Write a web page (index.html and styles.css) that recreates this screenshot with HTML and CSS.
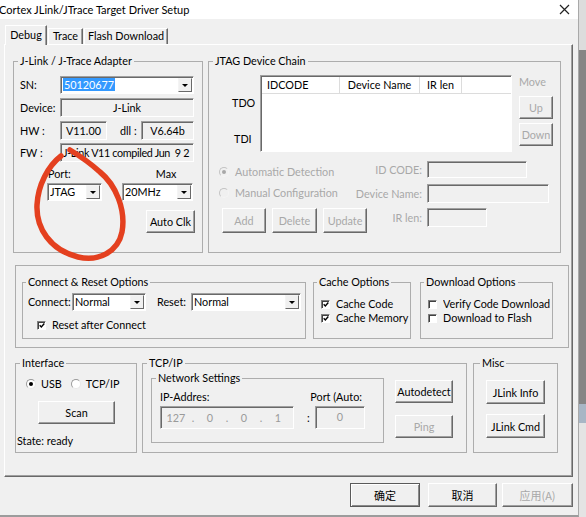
FILE: index.html
```html
<!DOCTYPE html>
<html>
<head>
<meta charset="utf-8">
<link rel="stylesheet" href="styles.css">
</head>
<body>
<div class="screen">
  <div class="window">
    <div class="titlebar">
      <span class="title">Cortex JLink/JTrace Target Driver Setup</span>
      <svg class="close" viewBox="0 0 11 11"><path d="M1 1 L10 10 M10 1 L1 10" stroke="#222" stroke-width="1.2"/></svg>
    </div>
    <div class="tabs">
      <div class="tab active t-debug">Debug</div>
      <div class="tab t-trace">Trace</div>
      <div class="tab t-flash">Flash Download</div>
    </div>
    <div class="panel">
      <div class="top-row">
        <fieldset class="group adapter">
          <legend>J-Link / J-Trace Adapter</legend>
          <div class="adapter-body">
            <div class="row h18">
              <span class="lbl w40">SN:</span>
              <div class="combo grow"><span class="val"><span class="sel">50120677</span></span><span class="drop"></span></div>
            </div>
            <div class="row h19 mt4">
              <span class="lbl w40">Device:</span>
              <div class="field grow center">J-Link</div>
            </div>
            <div class="row h19 mt4">
              <span class="lbl w40">HW :</span>
              <div class="field w47 center">V11.00</div>
              <span class="lbl dll">dll :</span>
              <div class="field grow center">V6.64b</div>
            </div>
            <div class="row h19 mt3">
              <span class="lbl w40">FW :</span>
              <div class="field grow fw">J-Link V11 compiled Jun&nbsp; 9 2</div>
            </div>
            <div class="row h14 mt5">
              <span class="lbl port-lbl">Port:</span>
              <span class="lbl max-lbl">Max</span>
            </div>
            <div class="row h18 mt2">
              <div class="combo port-combo"><span class="val">JTAG</span><span class="drop"></span></div>
              <div class="combo max-combo"><span class="val">20MHz</span><span class="drop"></span></div>
            </div>
            <div class="row mt9">
              <div class="btn autoclk">Auto Clk</div>
            </div>
          </div>
        </fieldset>
        <fieldset class="group jtag">
          <legend>JTAG Device Chain</legend>
          <div class="jt-top">
            <div class="jt-labels">
              <div class="tdo">TDO</div>
              <div class="tdi">TDI</div>
            </div>
            <div class="list">
              <div class="list-head">
                <span class="col c1">IDCODE</span>
                <span class="col c2">Device Name</span>
                <span class="col c3">IR len</span>
              </div>
            </div>
            <div class="move">
              <div class="move-lbl dis">Move</div>
              <div class="btn mv-up dis">Up</div>
              <div class="btn mv-down dis">Down</div>
            </div>
          </div>
          <div class="jt-bottom">
            <div class="jt-left">
              <div class="radio-row rr1 dis"><span class="radio on off"></span><span>Automatic Detection</span></div>
              <div class="radio-row rr2 dis"><span class="radio off"></span><span>Manual Configuration</span></div>
              <div class="jt-btns">
                <div class="btn b-add dis">Add</div>
                <div class="btn b-del dis">Delete</div>
                <div class="btn b-upd dis">Update</div>
              </div>
            </div>
            <div class="jt-right">
              <div class="frow fr1"><span class="flbl dis">ID CODE:</span><div class="field f-id"></div></div>
              <div class="frow fr2"><span class="flbl dis">Device Name:</span><div class="field f-dn"></div></div>
              <div class="frow fr3"><span class="flbl dis">IR len:</span><div class="field f-ir"></div></div>
            </div>
          </div>
        </fieldset>
      </div>

      <div class="opts">
        <fieldset class="group connect">
          <legend>Connect &amp; Reset Options</legend>
          <div class="row h18 mt4 cr-row">
            <span class="lbl w44">Connect:</span>
            <div class="combo c-conn"><span class="val">Normal</span><span class="drop"></span></div>
            <span class="lbl reset-lbl">Reset:</span>
            <div class="combo c-reset"><span class="val">Normal</span><span class="drop"></span></div>
          </div>
          <div class="check-row cr-check"><span class="check"><svg viewBox="0 0 7 7"><path d="M0.8 3.2 L2.7 5.2 L6.2 1.2" stroke="#000" stroke-width="1.6" fill="none"/></svg></span><span>Reset after Connect</span></div>
        </fieldset>
        <fieldset class="group cache">
          <legend>Cache Options</legend>
          <div class="check-row ck1"><span class="check"><svg viewBox="0 0 7 7"><path d="M0.8 3.2 L2.7 5.2 L6.2 1.2" stroke="#000" stroke-width="1.6" fill="none"/></svg></span><span>Cache Code</span></div>
          <div class="check-row ck2"><span class="check"><svg viewBox="0 0 7 7"><path d="M0.8 3.2 L2.7 5.2 L6.2 1.2" stroke="#000" stroke-width="1.6" fill="none"/></svg></span><span>Cache Memory</span></div>
        </fieldset>
        <fieldset class="group download">
          <legend>Download Options</legend>
          <div class="check-row ck1 dl"><span class="check"></span><span class="clip">Verify Code Download</span></div>
          <div class="check-row ck2 dl"><span class="check"></span><span>Download to Flash</span></div>
        </fieldset>
      </div>

      <div class="bottom-row">
        <fieldset class="group iface">
          <legend>Interface</legend>
          <div class="radio-row if-radios">
            <span class="radio on"></span><span class="usb">USB</span>
            <span class="radio r-tcp"></span><span>TCP/IP</span>
          </div>
          <div class="btn scan">Scan</div>
          <div class="state">State: ready</div>
        </fieldset>
        <fieldset class="group tcp">
          <legend>TCP/IP</legend>
          <div class="tcp-body">
            <fieldset class="group net">
              <legend>Network Settings</legend>
              <div class="row h14 net-lbls">
                <span class="lbl ip-lbl">IP-Addres:</span>
                <span class="lbl port-auto">Port (Auto:</span>
              </div>
              <div class="row net-fields">
                <div class="field ipfield">
                  <span class="oct">127</span><span class="dot">.</span><span class="oct">0</span><span class="dot">.</span><span class="oct">0</span><span class="dot">.</span><span class="oct">1</span>
                </div>
                <span class="colon">:</span>
                <div class="field portfield">0</div>
              </div>
            </fieldset>
            <div class="tcp-btns">
              <div class="btn b-auto">Autodetect</div>
              <div class="btn b-ping dis">Ping</div>
            </div>
          </div>
        </fieldset>
        <fieldset class="group misc">
          <legend>Misc</legend>
          <div class="btn b-info">JLink Info</div>
          <div class="btn b-cmd">JLink Cmd</div>
        </fieldset>
      </div>
    </div>
    <div class="footer">
      <div class="btn default f-ok">确定</div>
      <div class="btn f-cancel">取消</div>
      <div class="btn f-apply dis">应用(A)</div>
    </div>
  </div>
  <div class="desk"></div>
  <svg class="scribble" viewBox="0 0 586 517" width="586" height="517">
    <path d="M61 156 C48 166, 38 185, 37 205 C36 228, 50 250, 78 257 C98 262, 118 252, 122 232 C126 210, 116 185, 100 172 C90 163, 80 156, 70 150" stroke="#e4401f" stroke-width="5.5" fill="none" stroke-linecap="round"/>
  </svg>
</div>
</body>
</html>
```

FILE: styles.css
```css
* { box-sizing: border-box; }
body {
  margin: 0;
  font-family: Lato, "Noto Sans", "Noto Sans CJK SC", sans-serif;
  font-size: 10.8px;
  color: #000;
}
.screen {
  position: relative;
  display: flex;
  width: 586px;
  height: 517px;
  overflow: hidden;
  background: #f0f0f0;
}
.window {
  width: 579px;
  height: 517px;
  background: #f0f0f0;
  border-right: 1px solid #a9a9a9;
  border-bottom: 2px solid #9c9c9c;
  display: flex;
  flex-direction: column;
  flex: none;
}
.desk {
  flex: 1;
  background: linear-gradient(to bottom, #dcdcdc 0, #dcdcdc 50px, #858585 50px, #858585 404px, #a8b6c5 404px, #a8b6c5 423px, #e4e4e4 423px);
}
.titlebar {
  height: 19px;
  flex: none;
  background: #fff;
  display: flex;
  align-items: center;
  justify-content: space-between;
  padding-right: 8px;
}
.title { font-size: 11px; line-height: 17px; margin-left: -1px; }
.close { width: 11px; height: 11px; }

.tabs {
  height: 25px;
  flex: none;
  display: flex;
  align-items: flex-end;
  padding-left: 5px;
  position: relative;
  z-index: 1;
}
.tab {
  height: 16px;
  border: 1px solid;
  border-color: #fff #696969 transparent #fff;
  border-bottom: 0;
  box-shadow: inset -1px 0 #a0a0a0;
  line-height: 14px;
  text-align: center;
  white-space: nowrap;
}
.tab.active { height: 20px; margin-bottom: -1px; padding-top: 2px; background: #f0f0f0; }
.t-debug { width: 42px; }
.t-trace { width: 35px; margin-left: 1px; }
.t-flash { width: 84px; margin-left: 1px; }

.panel {
  margin-left: 4px;
  width: 569px;
  height: 433px;
  flex: none;
  border: 1px solid;
  border-color: #fff #696969 #696969 #fff;
  box-shadow: inset -1px -1px #a0a0a0;
  padding: 9px 0 0 8px;
}

.group {
  margin: 0;
  padding: 0;
  border: 1px solid #adadad;
  min-width: 0;
}
legend {
  padding: 0 2px;
  margin-left: 4px;
  line-height: 14px;
  white-space: nowrap;
}

.row { display: flex; align-items: center; }
.h14 { height: 14px; }
.h18 { height: 18px; }
.h19 { height: 19px; }
.mt2 { margin-top: 2px; }
.mt3 { margin-top: 3px; }
.mt4 { margin-top: 4px; }
.mt5 { margin-top: 5px; }
.mt9 { margin-top: 9px; }
.grow { flex: 1; min-width: 0; }
.w40 { width: 40px; flex: none; }
.w44 { width: 44px; flex: none; }
.w47 { width: 47px; flex: none; }
.lbl { white-space: nowrap; line-height: 14px; }
.center { text-align: center; }
.dis { color: #a8a8a8; }

.combo {
  display: flex;
  align-items: center;
  height: 18px;
  background: #fff;
  border: 1px solid;
  border-color: #a0a0a0 #fff #fff #a0a0a0;
  box-shadow: inset 1px 1px #696969;
  padding: 1px 1px 1px 2px;
}
.combo .val { flex: 1; min-width: 0; line-height: 14px; white-space: nowrap; overflow: hidden; }
.sel { background: #3399ff; color: #fff; padding: 0 1px; }
.drop {
  width: 14px;
  height: 14px;
  flex: none;
  border: 1px solid;
  border-color: #f4f4f4 #696969 #696969 #f4f4f4;
  background: #f0f0f0;
  display: flex;
  align-items: center;
  justify-content: center;
}
.drop::after {
  content: "";
  border-left: 3px solid transparent;
  border-right: 3px solid transparent;
  border-top: 3px solid #000;
}
.field {
  height: 19px;
  border: 1px solid;
  border-color: #a0a0a0 #fff #fff #a0a0a0;
  box-shadow: inset 1px 1px #696969;
  background: #f0f0f0;
  line-height: 17px;
  white-space: nowrap;
  overflow: hidden;
}
.fw { padding-left: 2px; letter-spacing: -0.35px; }
.btn {
  height: 23px;
  border: 1px solid;
  border-color: #fff #696969 #696969 #fff;
  box-shadow: inset -1px -1px #a0a0a0;
  background: #f0f0f0;
  display: flex;
  align-items: center;
  justify-content: center;
  white-space: nowrap;
  flex: none;
}
.btn.default {
  border-color: #5a5a5a;
  box-shadow: inset 1px 1px #fff, inset -1px -1px #8a8a8a;
}

.radio {
  width: 10px;
  height: 10px;
  flex: none;
  border-radius: 50%;
  border: 1px solid;
  border-color: #9a9a9a #e8e8e8 #e8e8e8 #9a9a9a;
  background: #fff;
  display: flex;
  align-items: center;
  justify-content: center;
}
.radio.on::after {
  content: "";
  width: 4px;
  height: 4px;
  border-radius: 50%;
  background: #000;
}
.radio.off { background: #f0f0f0; border-color: #c4c4c4 #f4f4f4 #f4f4f4 #c4c4c4; }
.radio.on.off::after { background: #a8a8a8; }
.radio-row { display: flex; align-items: center; height: 14px; line-height: 14px; white-space: nowrap; }
.radio-row .radio { margin-right: 6px; }

.check {
  width: 9px;
  height: 9px;
  flex: none;
  border: 1px solid;
  border-color: #808080 #fff #fff #808080;
  box-shadow: inset 1px 1px #404040;
  background: #fff;
  display: flex;
  align-items: center;
  justify-content: center;
  margin-right: 6px;
}
.check svg { width: 7px; height: 7px; margin: 1px 0 0 1px; }
.check-row { display: flex; align-items: center; height: 14px; line-height: 14px; white-space: nowrap; }

/* top row */
.top-row { display: flex; gap: 5px; }
.adapter { width: 190px; flex: none; }
.jtag { width: 353px; flex: none; }
.adapter-body { padding: 8px 8px 19px 6px; }
.dll { width: 21px; margin-left: 13px; flex: none; }
.port-lbl { margin-left: 28px; }
.max-lbl { margin-left: 85px; }
.port-combo { width: 55px; margin-left: 27px; flex: none; }
.max-combo { width: 71px; margin-left: 20px; flex: none; }
.autoclk { width: 49px; margin-left: 126px; }

.jt-top { display: flex; padding-top: 7px; height: 84px; }
.jt-labels { width: 51px; flex: none; line-height: 14px; }
.tdo { margin-top: 21px; padding-left: 23px; }
.tdi { margin-top: 22px; padding-left: 25px; }
.list {
  width: 252px;
  height: 77px;
  flex: none;
  background: #fff;
  border: 1px solid;
  border-color: #a0a0a0 #fff #fff #a0a0a0;
  box-shadow: inset 1px 1px #696969;
  padding: 1px 0 0 1px;
}
.list-head { display: flex; height: 17px; border-bottom: 1px solid #dcdcdc; }
.col { border-right: 1px solid #dcdcdc; line-height: 16px; white-space: nowrap; }
.c1 { width: 78px; padding-left: 5px; }
.c2 { width: 80px; text-align: center; }
.c3 { width: 42px; text-align: center; }
.move { width: 34px; margin-left: 7px; flex: none; }
.move-lbl { line-height: 14px; padding-left: 0; }
.mv-up { margin-top: 7px; width: 34px; }
.mv-down { margin-top: 4px; width: 34px; }

.jt-bottom { display: grid; grid-template-columns: 146px auto; margin-top: 6px; padding-bottom: 19px; }
.jt-left { min-width: 0; }
.rr1 { margin-top: 7px; padding-left: 10px; }
.rr2 { margin-top: 7px; padding-left: 10px; }
.jt-btns { display: flex; gap: 6px; margin-top: 8px; padding-left: 13px; width: 200px; }
.jt-btns .btn { height: 25px; }
.b-add { width: 44px; }
.b-del { width: 45px; }
.b-upd { width: 44px; }
.frow { display: flex; align-items: center; }
.flbl { width: 67px; text-align: right; margin-right: 5px; white-space: nowrap; line-height: 14px; flex: none; }
.fr1 { margin-top: 3px; }
.fr1 .field { height: 17px; }
.fr2 { margin-top: 6px; }
.fr3 { margin-top: 5px; }
.f-id { width: 100px; }
.f-dn { width: 122px; }
.f-ir { width: 60px; }

/* options */
.opts {
  margin: 12px 0 0 2px;
  width: 554px;
  height: 83px;
  border: 1px solid #adadad;
  padding: 9px 0 0 6px;
  display: flex;
}
.connect { width: 284px; flex: none; padding: 0 0 7px 5px; height: 64px; }
.connect legend { margin-left: -2px; }
.cache { width: 98px; margin-left: 7px; flex: none; padding-left: 7px; height: 64px; }
.cache legend { margin-left: -4px; }
.download { width: 133px; margin-left: 9px; flex: none; padding-left: 7px; height: 64px; }
.download legend { margin-left: -4px; }
.c-conn { width: 74px; flex: none; }
.reset-lbl { width: 34px; margin-left: 11px; flex: none; }
.c-reset { width: 110px; flex: none; }
.cr-check { margin-top: 7px; padding-left: 9px; }
.ck1 { margin-top: 8px; }
.dl .check { margin-right: 6px; }
.clip { width: 108px; overflow: hidden; }

/* bottom row */
.bottom-row { display: flex; margin: 8px 0 0 2px; }
.iface { width: 122px; flex: none; }
.tcp { width: 325px; margin-left: 5px; flex: none; }
.misc { width: 85px; margin-left: 6px; flex: none; padding-left: 12px; }
.misc legend { margin-left: -6px; }
.if-radios { margin-top: 7px; padding-left: 10px; }
.if-radios .radio { margin-right: 5px; }
.usb { margin-right: 9px; }
.scan { width: 77px; margin: 10px 0 0 22px; }
.state { margin-top: 10px; padding-left: 1px; line-height: 14px; white-space: nowrap; }

.tcp-body { display: flex; align-items: flex-start; padding: 1px 0 9px 8px; }
.net { width: 233px; flex: none; padding: 0 0 13px 8px; }
.net legend { margin-left: -4px; }
.net-lbls { margin-top: 5px; }
.port-auto { margin-left: 101px; }
.net-fields { margin-top: 2px; }
.ipfield { width: 134px; height: 23px; line-height: 21px; display: flex; padding-left: 3px; color: #9a9a9a; }
.oct { width: 24px; text-align: center; }
.dot { width: 10px; text-align: center; }
.colon { width: 8px; margin-left: 13px; line-height: 14px; }
.portfield { width: 50px; height: 23px; line-height: 19px; text-align: center; color: #9a9a9a; }
.tcp-btns { margin-left: 11px; margin-top: 9px; }
.b-auto { width: 58px; }
.b-ping { width: 58px; margin-top: 12px; }
.b-info { width: 59px; height: 24px; margin-top: 10px; }
.b-cmd { width: 59px; height: 24px; margin-top: 10px; }

/* footer */
.footer {
  flex: 1;
  display: flex;
  justify-content: flex-end;
  align-items: flex-start;
  padding: 6px 5px 0 0;
  gap: 8px;
  font-family: "Noto Sans CJK SC", sans-serif;
  font-size: 11px;
}
.footer .btn { height: 24px; }
.f-ok { width: 70px; }
.f-cancel { width: 69px; }
.f-apply { width: 71px; margin-left: -3px; }

.scribble { position: absolute; left: 0; top: 0; pointer-events: none; }
```
